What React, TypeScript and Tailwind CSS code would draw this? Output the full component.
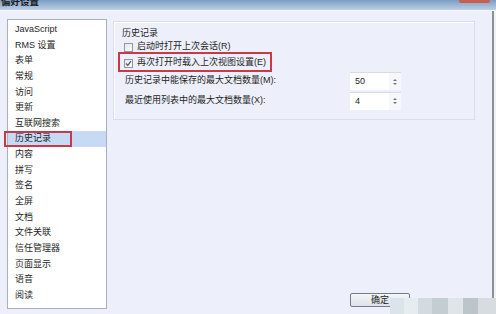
import React from "react";

const items = [
  "JavaScript",
  "RMS 设置",
  "表单",
  "常规",
  "访问",
  "更新",
  "互联网搜索",
  "历史记录",
  "内容",
  "拼写",
  "签名",
  "全屏",
  "文档",
  "文件关联",
  "信任管理器",
  "页面显示",
  "语音",
  "阅读",
];

function Spin({ value }: { value: string }) {
  return (
    <div className="flex h-[18px] w-[51px] border-t border-[#d6dbe3] bg-white">
      <div className="flex-1 pl-[5px] leading-[17px] text-[#222]">{value}</div>
      <div className="flex w-[12px] items-center justify-center bg-[#f6f7fa]">
        <svg width="6" height="10" viewBox="0 0 6 10">
          <path d="M1 4 L3 2 L5 4 Z" fill="#6a7280" />
          <path d="M1 6 L3 8 L5 6 Z" fill="#6a7280" />
        </svg>
      </div>
    </div>
  );
}

function Check({ checked }: { checked?: boolean }) {
  return (
    <div className="flex h-[9px] w-[9px] items-center justify-center border border-[#9097a2] bg-gradient-to-br from-[#e4e6ea] to-[#fafbfc]">
      {checked && (
        <svg width="7" height="7" viewBox="0 0 7 7">
          <path d="M1 3.5 L2.8 5.3 L6 1.2" stroke="#4a5260" strokeWidth="1.2" fill="none" />
        </svg>
      )}
    </div>
  );
}

export default function App() {
  const font = { fontFamily: '"Liberation Sans", "Noto Sans CJK SC", sans-serif' };
  return (
    <div
      className="relative h-[314px] w-[496px] overflow-hidden bg-[#edf0fb] text-[9px] text-[#1e1e1e]"
      style={font}
    >
      {/* title bar */}
      <div className="relative h-[10px] overflow-hidden bg-gradient-to-b from-[#7c9cc4] to-[#bcd0e6]">
        <div className="mt-[-5px] pl-[1px] text-[9.5px] font-bold leading-[13px] text-[#1a1a1a]">偏好设置</div>
        <div className="absolute right-[6px] top-0 h-[3px] w-[31px] rounded-b-[2px] bg-[#c8604c]" />
      </div>

      <div className="flex h-[304px] border-t border-[#f6f8fc]">
        {/* left list */}
        <div className="ml-[7px] mt-[8px] h-[290px] w-[100px] border border-[#a9b0b8] bg-white pt-[2px]">
          {items.map((it) => {
            const sel = it === "历史记录";
            return (
              <div
                key={it}
                className={
                  "relative h-[15.65px] pl-[7px] leading-[15.65px] " + (sel ? "bg-[#c6daf6]" : "")
                }
              >
                {it}
                {sel && (
                  <div className="absolute left-[-4px] top-[-0.5px] h-[16px] w-[68px] border-2 border-[#c8394a]" />
                )}
              </div>
            );
          })}
        </div>

        {/* right group */}
        <div className="ml-[6px] mt-[10px] flex h-[99px] w-[362px] flex-col self-start border border-[#d9dfe8] pl-[8px] pt-[4px] shadow-[inset_1px_1px_0_#ffffff]">
          <div className="h-[14px] leading-[14px]">历史记录</div>
          <div className="flex h-[14px] items-center pl-[2px]">
            <Check />
            <span className="ml-[4px]">启动时打开上次会话(R)</span>
          </div>
          <div className="relative flex h-[18px] items-center pl-[2px]">
            <Check checked />
            <span className="ml-[4px]">再次打开时载入上次视图设置(E)</span>
            <div className="absolute left-[-4px] top-[-2px] h-[20px] w-[154px] border-2 border-[#c8394a]" />
          </div>
          <div className="flex h-[18px] items-center pl-[3px]">
            <span className="flex-1">历史记录中能保存的最大文档数量(M):</span>
            <div className="mr-[73px]">
              <Spin value="50" />
            </div>
          </div>
          <div className="mt-[1px] flex h-[19px] items-center pl-[3px]">
            <span className="flex-1">最近使用列表中的最大文档数量(X):</span>
            <div className="mr-[73px]">
              <Spin value="4" />
            </div>
          </div>
        </div>

        {/* window right border */}
        <div className="ml-auto flex h-full">
          <div className="w-[2px] bg-[#8a939c]" />
          <div className="w-[2px] bg-[#f2f3f5]" />
        </div>
      </div>

      {/* OK button */}
      <div className="absolute left-[350px] top-[293px] flex h-[14px] w-[60px] items-center justify-center rounded-[2px] border border-[#6f7d8a] bg-gradient-to-b from-[#f4f6f8] to-[#dde3e9] leading-none">
        确定
      </div>

      {/* mosaic watermark */}
      <div className="absolute left-[390px] top-[298px] flex h-[16px]">
        <div className="w-[14px] bg-[#dbe4ea]" />
        <div className="w-[14px] bg-[#e6ecf0]" />
        <div className="w-[14px] bg-[#d3dbe0]" />
        <div className="w-[16px] bg-[#c3cdd2]" />
        <div className="w-[15px] bg-[#dfe5e8]" />
        <div className="w-[15px] bg-[#bcc6ca]" />
        <div className="w-[18px] bg-[#d6dcdf]" />
      </div>
    </div>
  );
}
